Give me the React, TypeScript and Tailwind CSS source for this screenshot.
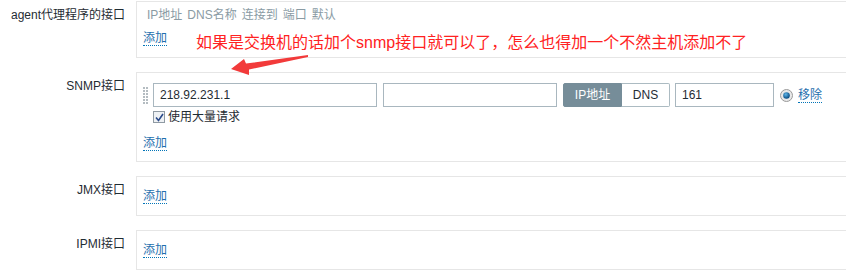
const font = { fontFamily: '"Liberation Sans", "Noto Sans CJK SC", sans-serif' }

const AddLink: React.FC<{ text?: string }> = ({ text = '添加' }) => (
  <span className="block w-fit leading-[14px] text-[12px] text-[#1f6fae] border-b border-dotted border-[#0275b8]">
    {text}
  </span>
)

const Label: React.FC<{ text: string }> = ({ text }) => (
  <div className="w-[126px] shrink-0 pt-[6px] pr-[1px] text-right text-[12px] leading-[16px] text-[#1f2c33]">
    {text}
  </div>
)

const DragHandle = () => (
  <svg width="6" height="17" viewBox="0 0 6 17" className="shrink-0">
    {[0, 1, 2, 3, 4, 5].map((r) => (
      <g key={r} fill="#b4bcc1">
        <rect x="0" y={r * 3} width="2" height="2" />
        <rect x="3" y={r * 3} width="2" height="2" />
      </g>
    ))}
  </svg>
)

export default function App() {
  return (
    <div className="relative w-[846px] h-[274px] overflow-hidden bg-white pt-[1px]" style={font}>
      <div className="flex flex-col gap-[14px]">
        {/* agent */}
        <div className="flex gap-[10px]">
          <Label text="agent代理程序的接口" />
          <div className="w-[720px] h-[57px] shrink-0 border border-[#e6e6e6] pl-[6px] pt-[5px]">
            <div className="flex gap-[5px] pl-[4px] text-[12px] leading-[16px] text-[#8a9ba4]">
              <span>IP地址</span>
              <span>DNS名称</span>
              <span>连接到</span>
              <span>端口</span>
              <span>默认</span>
            </div>
            <div className="mt-[8px]">
              <AddLink />
            </div>
          </div>
        </div>

        {/* SNMP */}
        <div className="flex gap-[10px]">
          <Label text="SNMP接口" />
          <div className="w-[720px] h-[90px] shrink-0 border border-[#e6e6e6] pl-[6px] pt-[10px]">
            <div className="flex items-center">
              <DragHandle />
              <div className="ml-[4px] w-[224px] h-[24px] border border-[#a9b7bf] px-[6px] text-[12px] leading-[22px] text-[#1f2c33]">
                218.92.231.1
              </div>
              <div className="ml-[6px] w-[174px] h-[24px] border border-[#a9b7bf]" />
              <div className="ml-[6px] flex h-[24px] text-[12px]">
                <div className="w-[59px] flex items-center justify-center bg-[#768d99] text-white border border-[#768d99] rounded-l-[2px]">
                  IP地址
                </div>
                <div className="w-[48px] flex items-center justify-center bg-white text-[#1f2c33] border border-l-0 border-[#acbbc2] rounded-r-[2px]">
                  DNS
                </div>
              </div>
              <div className="ml-[5px] w-[99px] h-[24px] border border-[#a9b7bf] px-[6px] text-[12px] leading-[22px] text-[#1f2c33]">
                161
              </div>
              <svg width="13" height="13" viewBox="0 0 13 13" className="ml-[6px]">
                <defs>
                  <radialGradient id="rb" cx="40%" cy="35%" r="60%">
                    <stop offset="0%" stopColor="#5fb6e8" />
                    <stop offset="100%" stopColor="#0b4f86" />
                  </radialGradient>
                </defs>
                <circle cx="6.5" cy="6.5" r="6" fill="#e8e8e8" stroke="#9a9a9a" strokeWidth="1" />
                <circle cx="6.5" cy="6.5" r="3.3" fill="url(#rb)" />
              </svg>
              <span className="ml-[5px]">
                <AddLink text="移除" />
              </span>
            </div>
            <div className="mt-[3px] ml-[10px] flex items-center gap-[3px] text-[12px] leading-[14px] text-[#1f2c33]">
              <span className="w-[12px] h-[12px] border border-[#8f9aa3] bg-[#eef1f4] flex items-center justify-center">
                <svg width="9" height="9" viewBox="0 0 9 9">
                  <path d="M1 4.5 L3.5 7.5 L8 1" fill="none" stroke="#2a4a8a" strokeWidth="1.6" />
                </svg>
              </span>
              <span>使用大量请求</span>
            </div>
            <div className="mt-[12px]">
              <AddLink />
            </div>
          </div>
        </div>

        {/* JMX */}
        <div className="flex gap-[10px]">
          <Label text="JMX接口" />
          <div className="w-[720px] h-[40px] shrink-0 border border-[#e6e6e6] pl-[6px] pt-[12px]">
            <AddLink />
          </div>
        </div>

        {/* IPMI */}
        <div className="flex gap-[10px]">
          <Label text="IPMI接口" />
          <div className="w-[720px] h-[40px] shrink-0 border border-[#e6e6e6] pl-[6px] pt-[12px]">
            <AddLink />
          </div>
        </div>
      </div>

      {/* annotation overlay */}
      <div className="absolute left-[196px] top-[34px] text-[16px] leading-[18px] text-[#ff2222] whitespace-nowrap">
        如果是交换机的话加个snmp接口就可以了，怎么也得加一个不然主机添加不了
      </div>
      <svg className="absolute left-0 top-0" width="846" height="274" viewBox="0 0 846 274">
        <polygon
          points="231,69 244,59 246,63.5 308,55 308,57 249,69.5 249,75"
          fill="#f23a3a"
        />
      </svg>
    </div>
  )
}
